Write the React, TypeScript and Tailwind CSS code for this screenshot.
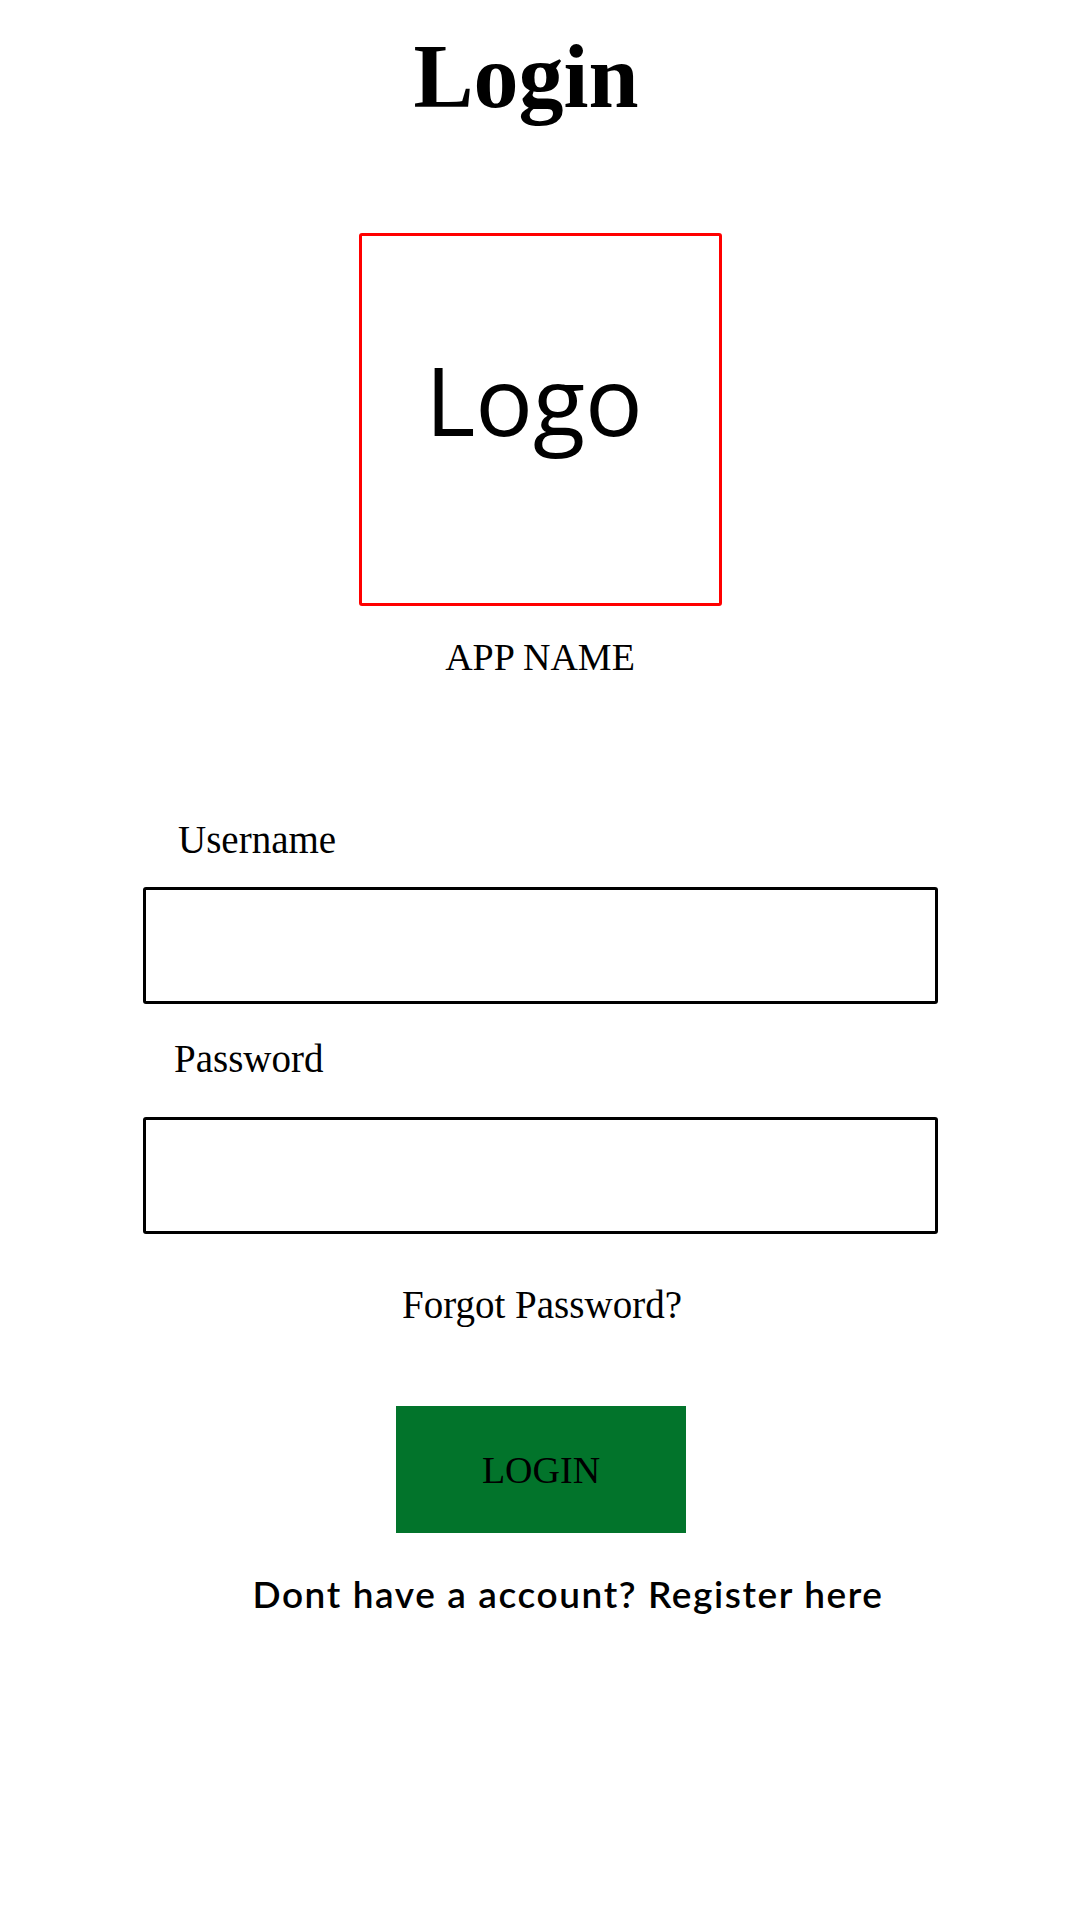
export default function App() {
  const serif = "font-['Liberation_Serif','Times_New_Roman',serif]";
  return (
    <div className="w-[1080px] min-h-[1920px] bg-white flex flex-col text-black">
      <div className="flex justify-center pr-[28px] pt-[32px]">
        <h1 className={`${serif} font-bold text-[90px] leading-none`}>Login</h1>
      </div>
      <div className="flex justify-center mt-[111px]">
        <div className="w-[363px] h-[373px] border-[3px] border-[#ff0000] rounded-[3px] flex justify-center items-start pt-[115px] pr-[12px]">
          <span className="font-['Open_Sans','Noto_Sans',sans-serif] text-[96px] leading-none">Logo</span>
        </div>
      </div>
      <div className="flex justify-center mt-[32px]">
        <span className={`${serif} text-[38px] leading-none`}>APP NAME</span>
      </div>
      <div className="flex flex-col pl-[143px] pr-[142px] mt-[144px]">
        <label className={`${serif} text-[39px] leading-none ml-[35px]`}>Username</label>
        <input className="mt-[28px] h-[117px] w-full border-[3px] border-black rounded-[3px] outline-none" />
        <label className={`${serif} text-[39px] leading-none ml-[31px] mt-[35px]`}>Password</label>
        <input type="password" className="mt-[39px] h-[117px] w-full border-[3px] border-black rounded-[3px] outline-none" />
      </div>
      <div className="flex justify-center mt-[51px] pl-[4px]">
        <span className={`${serif} text-[39px] leading-none`}>Forgot Password?</span>
      </div>
      <div className="flex justify-center mt-[82px] pl-[2px]">
        <button className={`${serif} w-[290px] h-[127px] bg-[#02742b] text-black text-[38px] leading-none flex items-center justify-center`}>
          LOGIN
        </button>
      </div>
      <div className="flex justify-center mt-[42px] pl-[56px]">
        <span className="font-['Lato','Noto_Sans',sans-serif] font-semibold text-[37px] leading-none tracking-[1.6px]">
          Dont have a account? Register here
        </span>
      </div>
    </div>
  );
}
